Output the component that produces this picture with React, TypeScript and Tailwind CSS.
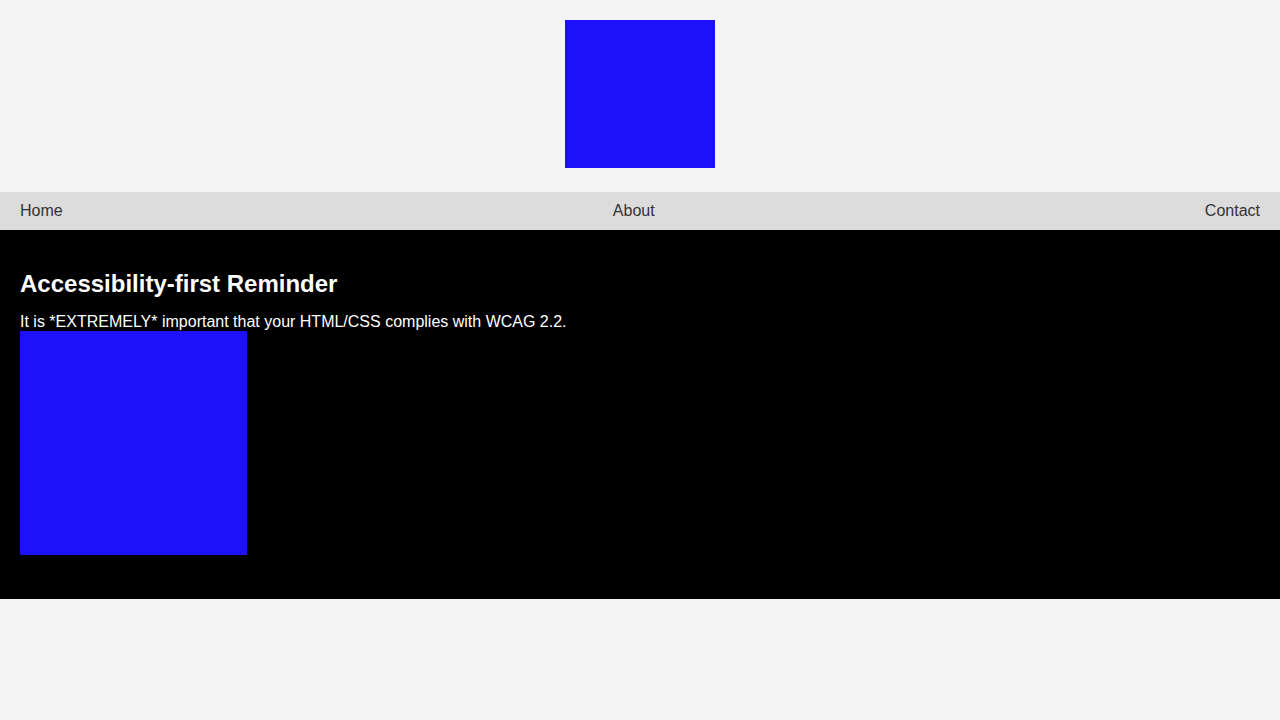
export default function App() {
  return (
    <div className="min-h-screen bg-[#f4f4f4] font-['Liberation_Sans',Arial,sans-serif]">
      <header className="flex justify-center pt-[20px] pb-[24px]">
        <div className="h-[148px] w-[150px] bg-[#1d10fa]" role="img" aria-label="Logo" />
      </header>

      <nav className="flex h-[38px] items-center justify-between bg-[#dcdcdc] px-[20px] text-[16px] text-[#333]">
        <a href="#">Home</a>
        <a href="#">About</a>
        <a href="#">Contact</a>
      </nav>

      <main className="bg-black px-[20px] pt-[20px] pb-[44px] text-white">
        <h2 className="mt-[19px] mb-[15px] text-[24px] font-bold leading-[29px]">
          Accessibility-first Reminder
        </h2>
        <p className="text-[16px] leading-[18px]">
          It is *EXTREMELY* important that your HTML/CSS complies with WCAG 2.2.
        </p>
        <div className="h-[224px] w-[227px] bg-[#1d10fa]" role="img" aria-label="Illustration" />
      </main>
    </div>
  );
}
